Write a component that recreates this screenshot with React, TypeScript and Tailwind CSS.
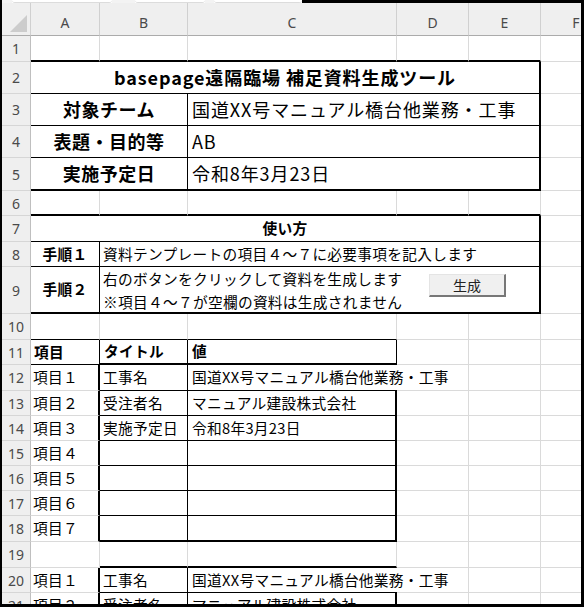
import clsx from 'clsx';
import type { ReactNode } from 'react';

// edge styles: g = sheet gridline, k = thin black, K = thick black, n = none
type Edge = 'g' | 'k' | 'K' | 'n';

const RIGHT: Record<Edge, string> = {
  g: 'border-r border-r-[#dadada]',
  k: 'border-r border-r-black',
  K: 'border-r-2 border-r-black',
  n: '',
};

const BOTTOM: Record<Edge, string> = {
  g: 'border-b border-b-[#dadada]',
  k: 'border-b border-b-black',
  K: 'border-b-2 border-b-black',
  n: '',
};

// column widths (right border included)
const W = {
  A: 'w-[69px]',
  B: 'w-[88px]',
  C: 'w-[209px]',
  D: 'w-[72px]',
  E: 'w-[72px]',
  AB: 'w-[157px]',
  CE: 'w-[353px]',
  BE: 'w-[441px]',
  AE: 'w-[510px]',
};

const BIG = 'text-[18px] tracking-[0.9px]';
const SMALL = 'text-[14.7px] tracking-[0.3px]';

type CellProps = {
  w: string;
  r?: Edge;
  b?: Edge;
  className?: string;
  children?: ReactNode;
};

function Cell({ w, r = 'g', b = 'g', className, children }: CellProps) {
  return (
    <div
      className={clsx(
        'flex h-full shrink-0 items-center whitespace-nowrap',
        w,
        RIGHT[r],
        BOTTOM[b],
        className
      )}
    >
      {children}
    </div>
  );
}

function Rest() {
  return <div className="h-full flex-1 border-b border-b-[#dadada]" />;
}

function Row({ n, h, children }: { n: number; h: string; children: ReactNode }) {
  return (
    <div className={clsx('flex', h)}>
      <div className="flex h-full w-[29px] shrink-0 items-center justify-center border-r border-b border-r-[#bfbfbf] border-b-[#d6d6d6] bg-[#efefef] font-['Noto_Sans',sans-serif] text-[14px] text-[#4a4a4a]">
        {n}
      </div>
      {children}
    </div>
  );
}

function Blank() {
  return (
    <>
      <Cell w={W.D} />
      <Cell w={W.E} />
      <Rest />
    </>
  );
}

const COLS = [
  { label: 'A', w: W.A },
  { label: 'B', w: W.B },
  { label: 'C', w: W.C },
  { label: 'D', w: W.D },
  { label: 'E', w: W.E },
];

function ColumnHeader() {
  return (
    <div className="flex h-[33px] bg-[#efefef] font-['Noto_Sans',sans-serif] text-[14px] text-[#4a4a4a]">
      <div className="relative h-full w-[29px] shrink-0 border-r border-b border-r-[#d0d0d0] border-b-[#ababab]">
        <svg className="absolute left-0 top-0" width="29" height="33" viewBox="0 0 29 33">
          <polygon points="25,12 25,29 8,29" fill="#cccccc" />
        </svg>
      </div>
      {COLS.map((c) => (
        <div
          key={c.label}
          className={clsx(
            'flex h-full shrink-0 items-center justify-center border-r border-b border-r-[#d0d0d0] border-b-[#ababab] pt-[6px]',
            c.w
          )}
        >
          {c.label}
        </div>
      ))}
      <div className="flex h-full flex-1 items-center justify-center border-b border-b-[#ababab] pt-[6px] pl-[30px]">
        F
      </div>
    </div>
  );
}

// empty item rows between 項目４ and 項目７
const EMPTY_ITEMS = [
  { n: 16, label: '項目５' },
  { n: 17, label: '項目６' },
];

export default function App() {
  return (
    <div className="h-[607px] w-[584px] overflow-hidden border-l-2 border-r-[3px] border-b-[3px] border-black bg-white font-['Noto_Sans_CJK_JP',sans-serif] text-black">
      <div className="flex h-[3px]">
        <div className="w-[10px] bg-[#f3f3f3]" />
        <div className="w-[100px] rounded-b-[3px] border-b border-[#dcdcdc] bg-white" />
        <div className="w-[23px] bg-[#f3f3f3]" />
        <div className="w-[70px] rounded-b-[3px] border-b border-[#dcdcdc] bg-white" />
        <div className="w-[9px] bg-[#f3f3f3]" />
        <div className="w-[88px] rounded-b-[3px] border-b border-[#dcdcdc] bg-white" />
        <div className="flex-1 bg-black" />
      </div>

      <ColumnHeader />

      <Row n={1} h="h-[26px]">
        <Cell w={W.A} b="K" />
        <Cell w={W.B} b="K" />
        <Cell w={W.C} b="K" />
        <Cell w={W.D} b="K" />
        <Cell w={W.E} b="K" />
        <Rest />
      </Row>

      <Row n={2} h="h-[32px]">
        <Cell w={W.AE} r="K" b="k" className={clsx('justify-center font-bold', BIG)}>
          basepage遠隔臨場 補足資料生成ツール
        </Cell>
        <Rest />
      </Row>

      <Row n={3} h="h-[32px]">
        <Cell w={W.AB} r="k" b="k" className="justify-center text-[18px] font-bold tracking-[0.5px]">
          対象チーム
        </Cell>
        <Cell w={W.CE} r="K" b="k" className={clsx('pl-[4px]', BIG)}>
          国道XX号マニュアル橋台他業務・工事
        </Cell>
        <Rest />
      </Row>

      <Row n={4} h="h-[32px]">
        <Cell w={W.AB} r="k" b="k" className="justify-center text-[18px] font-bold tracking-[0.5px]">
          表題・目的等
        </Cell>
        <Cell w={W.CE} r="K" b="k" className={clsx('pl-[4px]', BIG)}>
          AB
        </Cell>
        <Rest />
      </Row>

      <Row n={5} h="h-[33px]">
        <Cell w={W.AB} r="k" b="K" className="justify-center text-[18px] font-bold tracking-[0.5px]">
          実施予定日
        </Cell>
        <Cell w={W.CE} r="K" b="K" className={clsx('pl-[4px]', BIG)}>
          令和8年3月23日
        </Cell>
        <Rest />
      </Row>

      <Row n={6} h="h-[25px]">
        <Cell w={W.A} b="K" />
        <Cell w={W.B} b="K" />
        <Cell w={W.C} b="K" />
        <Cell w={W.D} b="K" />
        <Cell w={W.E} b="K" />
        <Rest />
      </Row>

      <Row n={7} h="h-[26px]">
        <Cell w={W.AE} r="K" b="k" className={clsx('justify-center font-bold', SMALL)}>
          使い方
        </Cell>
        <Rest />
      </Row>

      <Row n={8} h="h-[25px]">
        <Cell w={W.A} r="k" b="k" className={clsx('justify-center font-bold', SMALL)}>
          手順１
        </Cell>
        <Cell w={W.BE} r="K" b="k" className={clsx('pl-[3px]', SMALL)}>
          資料テンプレートの項目４～７に必要事項を記入します
        </Cell>
        <Rest />
      </Row>

      <Row n={9} h="h-[47px]">
        <Cell w={W.A} r="k" b="K" className={clsx('justify-center font-bold', SMALL)}>
          手順２
        </Cell>
        <Cell
          w={W.BE}
          r="K"
          b="K"
          className={clsx('relative flex-col items-start justify-center pl-[3px] leading-[23px]', SMALL)}
        >
          <span>右のボタンをクリックして資料を生成します</span>
          <span>※項目４～７が空欄の資料は生成されません</span>
          <button
            type="button"
            className="absolute left-[329px] top-[7px] flex h-[23px] w-[77px] items-center justify-center border-t border-l border-r-2 border-b-2 border-t-[#e4e4e4] border-l-[#e4e4e4] border-r-[#777] border-b-[#777] bg-[#f0f0f0] text-[14px] leading-none tracking-normal text-[#222]"
          >
            生成
          </button>
        </Cell>
        <Rest />
      </Row>

      <Row n={10} h="h-[26px]">
        <Cell w={W.A} b="k" />
        <Cell w={W.B} b="k" />
        <Cell w={W.C} b="k" />
        <Blank />
      </Row>

      <Row n={11} h="h-[25px]">
        <Cell w={W.A} r="k" b="k" className={clsx('pl-[3px] font-bold', SMALL)}>
          項目
        </Cell>
        <Cell w={W.B} r="k" b="K" className={clsx('pl-[4px] font-bold', SMALL)}>
          タイトル
        </Cell>
        <Cell w={W.C} r="k" b="K" className={clsx('pl-[4px] font-bold', SMALL)}>
          値
        </Cell>
        <Blank />
      </Row>

      <Row n={12} h="h-[26px]">
        <Cell w={W.A} r="K" className={clsx('pl-[2px]', SMALL)}>
          項目１
        </Cell>
        <Cell w={W.B} r="k" b="k" className={clsx('pl-[3px]', SMALL)}>
          工事名
        </Cell>
        <Cell w={W.C} r="n" b="k" className={clsx('pl-[4px]', SMALL)}>
          国道XX号マニュアル橋台他業務・工事
        </Cell>
        <Blank />
      </Row>

      <Row n={13} h="h-[25px]">
        <Cell w={W.A} r="K" className={clsx('pl-[2px]', SMALL)}>
          項目２
        </Cell>
        <Cell w={W.B} r="k" b="k" className={clsx('pl-[3px]', SMALL)}>
          受注者名
        </Cell>
        <Cell w={W.C} r="K" b="k" className={clsx('pl-[4px]', SMALL)}>
          マニュアル建設株式会社
        </Cell>
        <Blank />
      </Row>

      <Row n={14} h="h-[25px]">
        <Cell w={W.A} r="K" className={clsx('pl-[2px]', SMALL)}>
          項目３
        </Cell>
        <Cell w={W.B} r="k" b="k" className={clsx('pl-[3px]', SMALL)}>
          実施予定日
        </Cell>
        <Cell w={W.C} r="K" b="k" className={clsx('pl-[4px]', SMALL)}>
          令和8年3月23日
        </Cell>
        <Blank />
      </Row>

      <Row n={15} h="h-[25px]">
        <Cell w={W.A} r="K" className={clsx('pl-[2px]', SMALL)}>
          項目４
        </Cell>
        <Cell w={W.B} r="k" b="k" />
        <Cell w={W.C} r="K" b="k" />
        <Blank />
      </Row>

      {EMPTY_ITEMS.map((item) => (
        <Row key={item.n} n={item.n} h="h-[25px]">
          <Cell w={W.A} r="K" className={clsx('pl-[2px]', SMALL)}>
            {item.label}
          </Cell>
          <Cell w={W.B} r="k" b="k" />
          <Cell w={W.C} r="K" b="k" />
          <Blank />
        </Row>
      ))}

      <Row n={18} h="h-[26px]">
        <Cell w={W.A} r="K" className={clsx('pl-[2px]', SMALL)}>
          項目７
        </Cell>
        <Cell w={W.B} r="k" b="K" />
        <Cell w={W.C} r="K" b="K" />
        <Blank />
      </Row>

      <Row n={19} h="h-[26px]">
        <Cell w={W.A} />
        <Cell w={W.B} b="K" />
        <Cell w={W.C} b="K" />
        <Blank />
      </Row>

      <Row n={20} h="h-[25px]">
        <Cell w={W.A} r="K" className={clsx('pl-[2px]', SMALL)}>
          項目１
        </Cell>
        <Cell w={W.B} r="k" b="k" className={clsx('pl-[3px]', SMALL)}>
          工事名
        </Cell>
        <Cell w={W.C} r="n" b="k" className={clsx('pl-[4px]', SMALL)}>
          国道XX号マニュアル橋台他業務・工事
        </Cell>
        <Blank />
      </Row>

      <Row n={21} h="h-[25px]">
        <Cell w={W.A} r="K" className={clsx('pl-[2px]', SMALL)}>
          項目２
        </Cell>
        <Cell w={W.B} r="k" b="k" className={clsx('pl-[3px]', SMALL)}>
          受注者名
        </Cell>
        <Cell w={W.C} r="K" b="k" className={clsx('pl-[4px]', SMALL)}>
          マニュアル建設株式会社
        </Cell>
        <Blank />
      </Row>
    </div>
  );
}
